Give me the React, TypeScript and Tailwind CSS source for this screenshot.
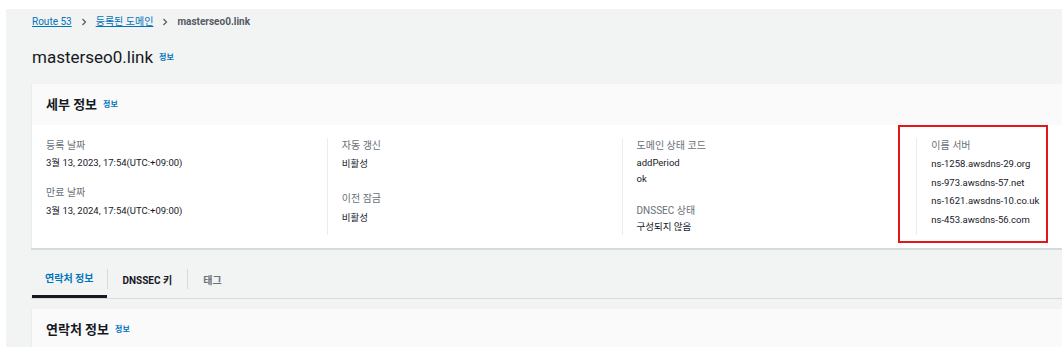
import React from 'react';

const FONT = { fontFamily: 'Roboto, "Noto Sans CJK KR", "Noto Sans", sans-serif' };

function InfoLink() {
  return <span className="ml-[6px] text-[8px] font-bold text-[#0073bb]">정보</span>;
}

function Chevron() {
  return (
    <svg width="8" height="8" viewBox="0 0 8 8" className="mx-[8px] text-[#545b64]">
      <path d="M2.5 1 L5.5 4 L2.5 7" fill="none" stroke="currentColor" strokeWidth="1.2" />
    </svg>
  );
}

function Label({ children }: { children: React.ReactNode }) {
  return <div className="text-[10px] leading-[16px] text-[#687078]">{children}</div>;
}

function Value({ children, className = '' }: { children: React.ReactNode; className?: string }) {
  return <div className={`text-[9.5px] leading-[16px] text-[#16191f] ${className}`}>{children}</div>;
}

const NAME_SERVERS = [
  'ns-1258.awsdns-29.org',
  'ns-973.awsdns-57.net',
  'ns-1621.awsdns-10.co.uk',
  'ns-453.awsdns-56.com',
];

export default function App() {
  return (
    <div className="h-[347px] w-[1062px] overflow-hidden bg-white pl-[6px] pt-[9px]" style={FONT}>
      <div className="h-full bg-[#f2f3f3] pl-[25px] pt-[6px]">
        {/* breadcrumb */}
        <nav className="flex h-[14px] items-center pl-[1px] text-[10px] leading-[14px]">
          <a className="text-[#0073bb] underline">Route 53</a>
          <Chevron />
          <a className="text-[#0073bb] underline">등록된 도메인</a>
          <Chevron />
          <span className="font-bold text-[#545b64]">masterseo0.link</span>
        </nav>

        <h1 className="mt-[15px] flex h-[28px] items-center pl-[1px] text-[17px] text-[#16191f]">
          masterseo0.link
          <InfoLink />
        </h1>

        {/* details card */}
        <div className="relative mt-[12px] w-[1180px] border-l border-[#eaeded] shadow-[0_2px_0_#d5dbdb]">
          <div className="flex h-[41px] items-center bg-[#fafafa] px-[14px]">
            <span className="text-[13px] font-bold text-[#16191f]">세부 정보</span>
            <InfoLink />
          </div>
          <div className="grid grid-cols-4 bg-white pb-[13px] pt-[13px]">
            <div className="px-[14px]">
              <Label>등록 날짜</Label>
              <Value className="mt-[1px]">3월 13, 2023, 17:54(UTC:+09:00)</Value>
              <div className="mt-[14px]">
                <Label>만료 날짜</Label>
              </div>
              <Value className="mt-[2px]">3월 13, 2024, 17:54(UTC:+09:00)</Value>
            </div>
            <div className="border-l border-[#eaeded] px-[14px]">
              <Label>자동 갱신</Label>
              <Value className="mt-[2px]">비활성</Value>
              <div className="mt-[19px]">
                <Label>이전 잠금</Label>
              </div>
              <Value className="mt-[3px]">비활성</Value>
            </div>
            <div className="border-l border-[#eaeded] px-[14px]">
              <Label>도메인 상태 코드</Label>
              <Value className="mt-[1px] leading-[14px]">addPeriod</Value>
              <Value className="leading-[14px]">ok</Value>
              <div className="mt-[16px]">
                <Label>DNSSEC 상태</Label>
              </div>
              <Value>구성되지 않음</Value>
            </div>
            <div className="border-l border-[#eaeded] px-[14px]">
              <Label>이름 서버</Label>
              <div className="mt-[1px] flex flex-col">
                {NAME_SERVERS.map((ns) => (
                  <Value key={ns} className="leading-[18.7px]">
                    {ns}
                  </Value>
                ))}
              </div>
            </div>
          </div>
          {/* annotation box */}
          <div className="absolute left-[866px] top-[41px] h-[118px] w-[150px] border-2 border-[#e3161b]" />
        </div>

        {/* tabs */}
        <div className="mt-[2px] flex h-[49px] w-[1180px] items-end border-b border-[#d5dbdb] pl-[1px]">
          <div className="flex h-[39px] items-center border-b-[3px] border-[#16191f] px-[13px] pt-[3px]">
            <span className="text-[10px] font-bold text-[#0073bb]">연락처 정보</span>
          </div>
          <div className="mb-[9px] h-[20px] w-px bg-[#d5dbdb]" />
          <div className="flex h-[39px] items-center px-[15px] pt-[3px]">
            <span className="text-[10px] font-bold text-[#16191f]">DNSSEC 키</span>
          </div>
          <div className="mb-[9px] h-[20px] w-px bg-[#d5dbdb]" />
          <div className="flex h-[39px] items-center px-[15px] pt-[3px]">
            <span className="text-[10px] font-bold text-[#687078]">태그</span>
          </div>
        </div>

        {/* contact card */}
        <div className="mt-[10px] w-[1180px] border-l border-[#eaeded]">
          <div className="flex h-[41px] items-center bg-[#fafafa] px-[14px]">
            <span className="text-[13px] font-bold text-[#16191f]">연락처 정보</span>
            <InfoLink />
          </div>
        </div>
      </div>
    </div>
  );
}
